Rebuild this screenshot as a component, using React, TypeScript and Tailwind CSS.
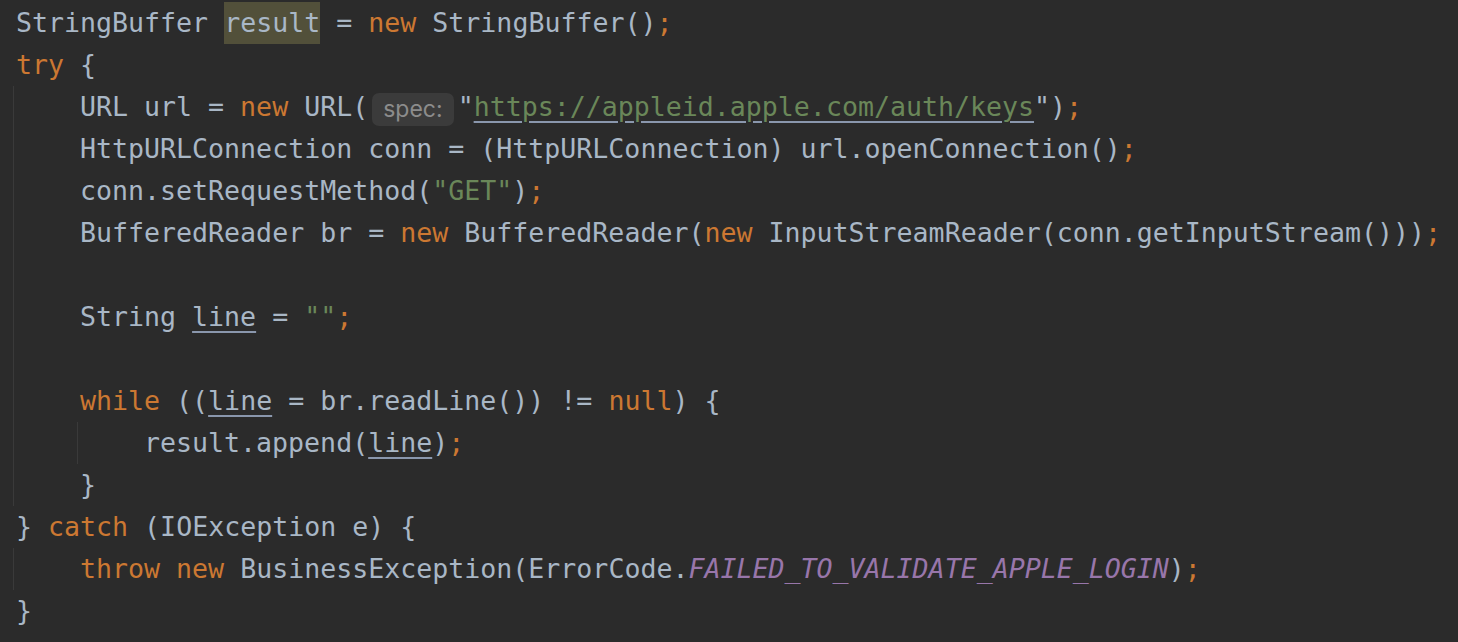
import type React from "react"

// Darcula-ish palette
const K: React.FC<{ children: React.ReactNode }> = ({ children }) => (
  <span className="text-[#cc7832]">{children}</span>
)
const S: React.FC<{ children: React.ReactNode }> = ({ children }) => (
  <span className="text-[#6a8759]">{children}</span>
)
const U: React.FC<{ children: React.ReactNode }> = ({ children }) => (
  <span className="underline decoration-[#8a97ad] decoration-2 underline-offset-[5px]">{children}</span>
)

const Line: React.FC<{ children?: React.ReactNode }> = ({ children }) => (
  <div className="h-[42px] leading-[42px] pl-[3px] whitespace-pre">{children}</div>
)

const Block: React.FC<{ children: React.ReactNode }> = ({ children }) => (
  <div className="border-l border-[#3a3a3a]">
    <div className="pl-[63px]">{children}</div>
  </div>
)

const Hint: React.FC<{ label: string }> = ({ label }) => (
  <span className="inline-block mx-[4px] px-[11px] h-[33px] leading-[33px] rounded-[7px] bg-[#3b3b3b] text-[#8c8c8c] text-[23px] font-['Inter',sans-serif] align-[-1px]">
    {label}
  </span>
)

export default function App() {
  return (
    <div className="w-[1458px] h-[642px] bg-[#2b2b2b] text-[#a9b7c6] font-['DejaVu_Sans_Mono',monospace] text-[26.6px] pl-[13px] pt-[2px] overflow-hidden">
      <Line>
        StringBuffer <span className="bg-[#52503a] inline-block h-[42px]">result</span> = <K>new</K> StringBuffer()<K>;</K>
      </Line>
      <Line>
        <K>try</K> {"{"}
      </Line>
      <Block>
        <Line>
          URL url = <K>new</K> URL(<Hint label="spec:" />"<S><U>https://appleid.apple.com/auth/keys</U></S>")
          <K>;</K>
        </Line>
        <Line>
          HttpURLConnection conn = (HttpURLConnection) url.openConnection()<K>;</K>
        </Line>
        <Line>
          conn.setRequestMethod(<S>"GET"</S>)<K>;</K>
        </Line>
        <Line>
          BufferedReader br = <K>new</K> BufferedReader(<K>new</K> InputStreamReader(conn.getInputStream()))<K>;</K>
        </Line>
        <Line />
        <Line>
          String <U>line</U> = <S>""</S>
          <K>;</K>
        </Line>
        <Line />
        <Line>
          <K>while</K> ((<U>line</U> = br.readLine()) != <K>null</K>) {"{"}
        </Line>
        <Block>
          <Line>
            result.append(<U>line</U>)<K>;</K>
          </Line>
        </Block>
        <Line>{"}"}</Line>
      </Block>
      <Line>
        {"} "}
        <K>catch</K> (IOException e) {"{"}
      </Line>
      <Block>
        <Line>
          <K>throw</K> <K>new</K> BusinessException(ErrorCode.
          <span className="text-[#9876aa] italic">FAILED_TO_VALIDATE_APPLE_LOGIN</span>)<K>;</K>
        </Line>
      </Block>
      <Line>{"}"}</Line>
    </div>
  )
}
